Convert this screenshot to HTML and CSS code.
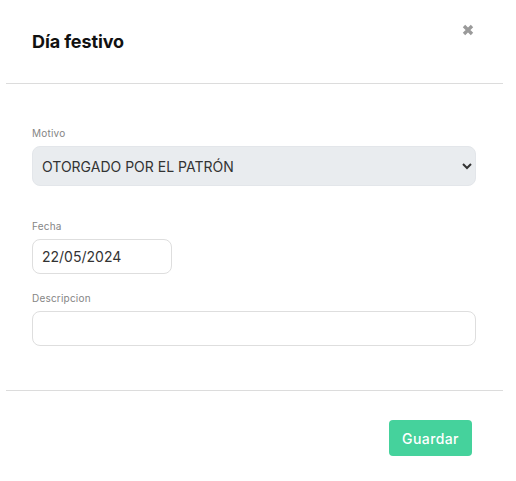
FILE: index.html
```html
<!DOCTYPE html>
<html lang="es">
  <head>
    <meta charset="UTF-8" />
    <meta name="viewport" content="width=device-width, initial-scale=1.0" />
    <title>Día festivo</title>
    <link rel="stylesheet" href="styles.css">
  </head>
  <body>
    <div class="modal">
      <div class="modal-header">
        <h1>Día festivo</h1>
        <button class="close-btn" type="button" aria-label="Cerrar">
          <svg width="12" height="12" viewBox="0 0 12 12">
            <path d="M2 2 L10 10 M10 2 L2 10" stroke="#9a9a9a" stroke-width="3.4" />
          </svg>
        </button>
      </div>

      <form class="modal-body">
        <div class="field field-first">
          <label for="motivo">Motivo</label>
          <select id="motivo" class="select">
            <option>OTORGADO POR EL PATRÓN</option>
          </select>
        </div>

        <div class="field">
          <label for="fecha">Fecha</label>
          <input id="fecha" class="input input-date" type="text" value="22/05/2024" />
        </div>

        <div class="field">
          <label for="descripcion">Descripcion</label>
          <input id="descripcion" class="input" type="text" />
        </div>
      </form>

      <div class="modal-footer">
        <button class="save-btn" type="button">Guardar</button>
      </div>
    </div>
  </body>
</html>
```

FILE: styles.css
```css
body {
  font-family: "Inter", "Open Sans", sans-serif;
  margin: 0;
  padding: 0;
  background-color: #ffffff;
  color: #222;
}

.modal {
  width: 497px;
  margin-left: 6px;
}

.modal-header {
  display: flex;
  justify-content: space-between;
  align-items: flex-start;
  height: 84px;
  padding: 0 29px 0 26px;
  border-bottom: 1px solid #dcdcdc;
  box-sizing: border-box;
}

h1 {
  margin: 31px 0 0;
  font-size: 18px;
  font-weight: 700;
  color: #111;
  letter-spacing: -0.1px;
}

.close-btn {
  margin-top: 24px;
  padding: 0;
  border: none;
  background: none;
  cursor: pointer;
  line-height: 0;
}

.modal-body {
  display: flex;
  flex-direction: column;
  gap: 18px;
  padding: 43px 27px 44px 26px;
  border-bottom: 1px solid #dcdcdc;
}

.field {
  display: flex;
  flex-direction: column;
  gap: 7px;
}

.field-first {
  margin-bottom: 16px;
}

label {
  font-size: 10px;
  color: #858585;
  line-height: 12px;
  letter-spacing: 0.2px;
}

.select,
.input {
  font-family: inherit;
  font-size: 14px;
  color: #333;
  border: 1px solid #dedede;
  border-radius: 8px;
  box-sizing: border-box;
  width: 100%;
}

.select {
  height: 40px;
  padding: 0 6px 0 5px;
  background-color: #e9ecef;
  border-color: #e3e6ea;
}

.input {
  height: 35px;
  padding: 0 9px;
  background-color: #fff;
}

.input-date {
  width: 140px;
}

.modal-footer {
  display: flex;
  justify-content: flex-end;
  padding: 29px 31px 24px;
}

.save-btn {
  font-family: inherit;
  font-size: 14px;
  font-weight: 500;
  letter-spacing: 0.4px;
  color: #fff;
  background-color: #45d29c;
  border: none;
  border-radius: 4px;
  width: 83px;
  height: 36px;
  cursor: pointer;
}
```
